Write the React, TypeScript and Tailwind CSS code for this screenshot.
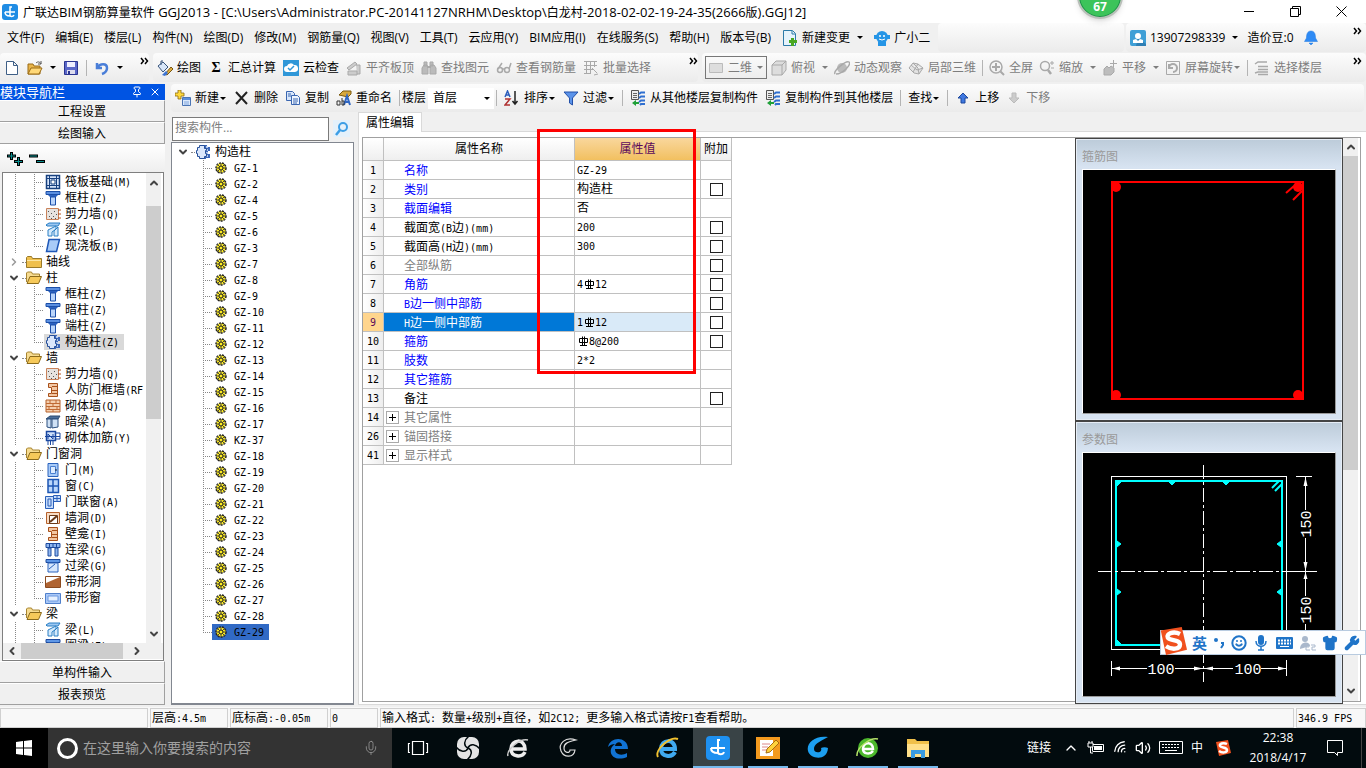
import type { ReactNode } from "react";
import { ChevronDown, ChevronLeft, ChevronRight, ChevronUp, Mic, Pin, Wifi, Volume2, Keyboard, Shirt, Wrench, Smile, X } from "lucide-react";

/* ---------- Iconos 16x16 ---------- */

const G = "#a9a9a9";

const column = (
  <>
    <path d="M1 1.500h14v3H1z" fill="#5b8fe0" stroke="#1c4fa8" />
    <path d="M3 5h10l-2 2H5z" fill="#2c62c0" />
    <path d="M5.500 7h5v8h-5z" fill="#b9d4fa" stroke="#1c4fa8" />
  </>
);

const wall = (
  <>
    <path d="M1.500 2.500h12v11h-12z" fill="#e6e3df" stroke="#c9825a" />
    <path d="M13 4h3M13 8h3M13 12h3" stroke="#b5521c" />
    <path d="M3 5.500h1M6 7.500h1M9 5.500h1M4 10.500h1M8 10.500h1M11 8.500h1M6 12.500h1M10 12.500h1" stroke="#555" />
  </>
);

const beam = (
  <>
    <path d="M1 3l3-2h11l-2 3H2z" fill="#9cc8f2" stroke="#2a7fc4" />
    <path d="M3 14V8l8-4v3l-4 3v4zM9 14V9l4-4v9z" fill="#d4eafc" stroke="#2a7fc4" />
  </>
);

const niche = (
  <>
    <path d="M3.500 1.500h9v13h-9v-3h3v-6h-3z" fill="#f3c7a3" stroke="#a8501a" />
    <path d="M7 4.500h5M7 8.500h5M7 11.500h5" stroke="#a8501a" />
  </>
);

const struct = (
  <>
    <path d="M9 1h3v2h3v4h-2v3h2v4h-4v1H9z" fill="#3a66b8" />
    <path d="M11 3h2M11 6h2M11 9h2M11 12h2" stroke="#dce8fb" strokeWidth="1.500" />
    <path d="M4.500 1.500h5v3h2v2h-1v3h1v3h-2v2h-5v-2h-2v-3h-1v-3h1v-3h2z" fill="#dbe7fb" stroke="#27509a" />
  </>
);

const copyFloor = (
  <>
    <path d="M1.500 .5h7v9h-7z" fill="#eee" stroke="#555" />
    <path d="M3 3.500h4M3 5.500h4M3 7.500h4" stroke="#666" />
    <path d="M9 4l2-1.500h4M9 8l2-1.500h4M9 12l2-1.500h4M10 15l1-1h4" stroke="#2f6fd0" strokeWidth="2" fill="none" />
    <path d="M2 13l4-3v2h3v2H6v2z" fill="#1fa038" />
  </>
);

const icons: Record<string, ReactNode> = {
  file: <path d="M2.500 1.500h7l4 4v9h-11zM9.500 1.500v4h4" fill="#fff" stroke="#3f5f86" />,
  open: (
    <>
      <path d="M1 4h5l1 2h6v8H1z" fill="#e9b54a" stroke="#9a6b14" />
      <path d="M1 14l3-6h11l-3 6z" fill="#ffd878" stroke="#9a6b14" />
      <path d="M9 3c2-2 4-1 5 1M14 1v3h-3" fill="none" stroke="#555" />
    </>
  ),
  save: (
    <>
      <path d="M1.500 1.500h13v13h-13z" fill="#5a67c8" stroke="#2a3490" />
      <path d="M4 2h8v5H4z" fill="#eef" />
      <path d="M4 10h8v4H4z" fill="#dde" />
      <path d="M5 11h2v3H5z" fill="#2a3490" />
    </>
  ),
  undo: <path d="M3 3v5h5M3 8c3-5 10-5 10 0 0 3-2 5-5 6" fill="none" stroke="#4a7ed8" strokeWidth="2.500" />,
  paint: (
    <>
      <path d="M1 6l5-4 5 5-5 5z" fill="#d8e6f8" stroke="#39557c" />
      <path d="M4 5V1h2" fill="none" stroke="#39557c" />
      <path d="M8 14l6-7 2 2-6 6z" fill="#e2b040" stroke="#775510" />
      <path d="M5 15l4-4 2 2-3 3z" fill="#3d74d4" />
    </>
  ),
  cloud: (
    <>
      <path d="M0 0h16v16H0z" fill="#2f97d8" />
      <path d="M4 12a3 3 0 0 1 0-6 4 4 0 0 1 7-1 3.500 3.500 0 0 1 1 7z" fill="#fff" />
      <path d="M5 8l2 2 4-4" fill="none" stroke="#2f97d8" strokeWidth="1.500" />
    </>
  ),
  align: <path d="M1 8l8-6 2 2-8 6zM2 11h9v4H2zM10 5h4v9h-3" fill="#ccc" stroke={G} />,
  find: (
    <>
      <path d="M3 2h3v4H3zM9 2h3v4H9zM1 8l2-3h3l1 3v6H1zM9 8l1-3h3l2 3v6H9z" fill="#bbb" stroke={G} />
      <path d="M6 7h4" stroke={G} strokeWidth="2" />
    </>
  ),
  glasses: (
    <g fill="none" stroke={G} strokeWidth="1.500">
      <circle cx="4" cy="10" r="2.500" />
      <circle cx="11" cy="10" r="2.500" />
      <path d="M6 9h3M2 9l4-6M13 9l2-6" />
    </g>
  ),
  batch: <path d="M1 1.500h13M1 5.500h13M1 9.500h9M1 13.500h7M3.500 1v13M7.500 1v13M11.500 1v6M9 8l5 5M11 15l4-1" fill="none" stroke={G} />,
  flat: <path d="M1.500 3.500h13v9h-13z" fill="#ddd" stroke="#bbb" />,
  cube: <path d="M1 5l4-4h10v9l-4 5H1zM1 5h10v10M11 5l4-4" fill="#ddd" stroke={G} />,
  orbit: (
    <>
      <circle cx="8" cy="8" r="5" fill="#bbb" />
      <path d="M1 14C-1 11 12 0 15 2s-6 12-13 12" fill="none" stroke={G} strokeWidth="1.500" />
    </>
  ),
  local3d: <path d="M1 8l4-5 5 1 5 4-4 6-5-1zM5 3l5 5 1 6M3 5l6 5 6-2M10 4L5 12" fill="#e3e3e3" stroke={G} />,
  full: (
    <g fill="none" stroke={G}>
      <circle cx="7" cy="7" r="6" strokeWidth="1.500" />
      <path d="M7 3v8M3 7h8M11.500 11.500L15 15" strokeWidth="2" />
    </g>
  ),
  zoom: (
    <g fill="none" stroke={G}>
      <circle cx="6" cy="6" r="4.500" strokeWidth="1.500" />
      <path d="M9 10l3 4" strokeWidth="2.500" />
      <path d="M11 3h4M13 1v4M12 8h3" />
    </g>
  ),
  pan: (
    <>
      <path d="M2 15V9l3-3 2 2 2-2 3 2v4l-3 3z" fill="#bdbdbd" stroke={G} />
      <path d="M11.500 0v7M8 3.500h7" stroke={G} />
    </>
  ),
  rotate: (
    <g fill="none" stroke={G}>
      <path d="M1.500 1.500h13v13h-13z" />
      <path d="M4 8a4 4 0 1 1 4 4M4 4v4h4" strokeWidth="2" />
    </g>
  ),
  floors: <path d="M1 4l3-2h9M4 6.500h10M4 9.500h10M1 13l3-1h10M4 14.500h10" fill="none" stroke={G} strokeWidth="1.500" />,
  add: (
    <>
      <path d="M3 0h3v3h3v3H6v3H3V6H0V3h3z" fill="#ffd93c" stroke="#8a6a12" strokeWidth=".8" />
      <path d="M7.500 7.500h8v8h-8z" fill="#dce9fb" stroke="#4a74b4" />
      <path d="M8 8h7v2H8z" fill="#5b8edc" />
      <path d="M9 12h5M9 14h5" stroke="#7fa4dc" />
    </>
  ),
  del: <path d="M2 2l11 12M13 2L2 14" stroke="#222" strokeWidth="2" />,
  copy: (
    <g stroke="#3a66b0">
      <path d="M1.500 1.500h6l2 2v7h-8z" fill="#d7e6fb" />
      <path d="M6.500 5.500h6l2 2v7h-8z" fill="#eef5ff" />
      <path d="M3 4h3M3 6h3M8 9h5M8 11h5M8 13h4" />
    </g>
  ),
  rename: (
    <>
      <path d="M3 5l4-4h8v3l-3 3z" fill="#d8a83c" stroke="#7b5a10" />
      <path d="M8 15l3-9 3 9M9 12h4" fill="none" stroke="#2f66c4" strokeWidth="2" />
      <path d="M1 15v-4h3v4zM6 8v7h2v-4H6" fill="none" stroke="#333" />
    </>
  ),
  sort: (
    <g fill="none" strokeWidth="1.500">
      <path d="M1 7l2.500-6L6 7M2 5h3" stroke="#2d5ebc" />
      <path d="M1 9h5l-5 6h5" stroke="#b03232" />
      <path d="M11 1v13M8.500 11l2.500 3 2.500-3" stroke="#222" />
    </g>
  ),
  filter: <path d="M1 2h14l-5.500 6v7l-3-2V8z" fill="#5b93ea" stroke="#2350a8" />,
  copyFloor,
  up: <path d="M8 3l5 5h-3v5H6V8H3z" fill="#3f78e0" stroke="#1d479c" />,
  down: <path d="M8 13l5-5h-3V3H6v5H3z" fill="#ccc" stroke="#bbb" />,
  change: (
    <>
      <path d="M1.500 .5h9l3 3v12h-12z" fill="#e6f3fb" stroke="#2c7aa8" />
      <path d="M10 1v3h3" fill="none" stroke="#2c7aa8" />
      <path d="M9 8h3v2h3v3h-3v3H9v-3H7v-3h2z" fill="#49a821" />
    </>
  ),
  robot: (
    <>
      <circle cx="8" cy="7" r="6" fill="#2595e6" />
      <path d="M0 5h3v4H0zM13 5h3v4h-3zM4 12h8v4H4z" fill="#2595e6" />
      <circle cx="6" cy="6" r="1" fill="#fff" />
      <circle cx="10" cy="6" r="1" fill="#fff" />
      <path d="M5 9q3 2 6 0" fill="none" stroke="#fff" />
    </>
  ),
  user: (
    <>
      <rect width="16" height="16" rx="2" fill="#3f9fd6" />
      <path d="M8 8l8 6v2H6z" fill="#2f7fb4" />
      <circle cx="8" cy="6" r="3" fill="#fff" />
      <path d="M3 13v-3l3-1 2 2 2-2 3 1v3z" fill="#fff" />
    </>
  ),
  bell: <path d="M8 1c4 0 4.500 4 4.500 7l2 3.500h-13l2-3.500C3.500 5 4 1 8 1zM6 13h4l-2 2z" fill="#2f8bf5" stroke="#1f78e0" strokeWidth=".5" />,
  app: (
    <>
      <rect width="16" height="16" rx="3" fill="#1f8ce4" />
      <path d="M10 3H8v8c0 2 3 2 4 0M3 8h10M3 8c0 3 2 4 5 4" fill="none" stroke="#fff" strokeWidth="1.500" />
    </>
  ),
  folder: (
    <>
      <path d="M.5 3.500l1-1h4l1 2h9v9H.5z" fill="#efc04e" stroke="#9a7a2a" />
      <path d="M1 6h14v1H1z" fill="#fbe6a6" />
    </>
  ),
  folderOpen: (
    <>
      <path d="M.5 12V3l1-1h4l1 2h7v3" fill="#f7dc92" stroke="#a88530" />
      <path d="M1 13.500l3-7h11.500l-3 7z" fill="#f6c95a" stroke="#8a6a1c" />
    </>
  ),
  raft: (
    <>
      <path d="M1.500 1.500h13v13h-13z" fill="#d6e4fa" stroke="#17407f" strokeWidth="1.500" />
      <path d="M4.500 1v14M11.500 1v14M1 4.500h14M1 11.500h14M6 6h4v4H6z" stroke="#17407f" fill="#fff" />
    </>
  ),
  column,
  wall,
  beam,
  niche,
  struct,
  slab: <path d="M4 1.500h10.500l-3 12H1.500z" fill="#a8cbf8" stroke="#1f58b8" strokeWidth="1.500" />,
  brick: (
    <>
      <path d="M1 2h14v12H1z" fill="#f5cfae" stroke="#b5602a" />
      <path d="M1 5.500h14M1 8.500h14M1 11.500h14M5 2v3M11 2v3M8 5v3M4 9v3M12 9v3M8 12v2" stroke="#c06a34" />
    </>
  ),
  hidden: (
    <>
      <path d="M1 5l4-3h10l-2 3z" fill="#4a6f9c" stroke="#2c4a70" />
      <path d="M2 5h4v9l-4-1zM7 5h6v8l-6 1z" fill="#cfe1f5" stroke="#2c5080" />
    </>
  ),
  masonry: (
    <g fill="none" stroke="#1947a0">
      <path d="M1.500 1.500h9v9h-9z" fill="#cfe1fb" strokeWidth="1.500" />
      <path d="M3 11v4M5.500 11v4M8 11v4M0 6.500h15M11 3h4v6h-4M3 9V4l5 5V4" />
    </g>
  ),
  door: (
    <>
      <path d="M3 1.500h10v13H3z" fill="#a8cbf8" stroke="#2a62bc" />
      <path d="M5.500 4.500h5v7h-5z" fill="#dcebff" stroke="#4a80d0" />
      <path d="M10 8h2" stroke="#123" />
    </>
  ),
  window: <path d="M3 1.500h10.500v13H3zM8 2v12M3 8h10" fill="#b9d6fb" stroke="#1c56b4" strokeWidth="1.500" />,
  doorWindow: <path d="M.5 2.500h8v12h-8zM3 5h3v7H3zM8.500 1.500h7v6h-7zM12 2v6M9 4.500h6" fill="#c6dcfb" stroke="#2a5fb8" />,
  hole: (
    <>
      <path d="M1.500 2.500h13v11h-13z" fill="#f8dcc4" stroke="#b5602a" />
      <path d="M4.500 5.500h8v8h-8z" fill="#fff" stroke="#6a3a18" />
      <path d="M5 12l7-6" stroke="#6a3a18" strokeWidth="2" />
    </>
  ),
  link: <path d="M1 1.500h14v4H1zM3 6h3v8H3zM10 6h3v8h-3zM4.500 2v3M8 2v3M11.500 2v3" fill="#8fb6f0" stroke="#1d4a9e" />,
  lintel: (
    <>
      <path d="M1 1.500h14v3H1z" fill="#5f97e6" stroke="#1d4a9e" />
      <path d="M3 5h10v9H3z" fill="#d6e6fc" stroke="#2a62bc" />
      <path d="M4 11l6-5" stroke="#2a62bc" />
    </>
  ),
  stripHole: (
    <>
      <path d="M.5 2.500h15v11H.5z" fill="#fff" stroke="#8a4a20" />
      <path d="M1 9l14-6v10H1z" fill="#b06432" />
    </>
  ),
  stripWindow: (
    <>
      <path d="M.5 3.500h15v10H.5z" fill="#a9c8f7" stroke="#5080cc" />
      <path d="M3 6h10v5H3z" fill="#e6f0ff" stroke="#6b98e0" />
    </>
  ),
  gear: (
    <>
      <circle cx="8" cy="8" r="5" fill="#ffee22" stroke="#222" strokeWidth="1.500" strokeDasharray="2 1" />
      <path d="M8 3v10M3 8h10M4 4l8 8M12 4l-8 8" stroke="#444" />
      <circle cx="8" cy="8" r="2" fill="#ffee22" stroke="#222" />
    </>
  ),
  sogou: (
    <>
      <path d="M1 2l12-2 3 13-12 3z" fill="#f0501e" />
      <path d="M12 4C8 2 4 4 5 6s7 1 7 4-5 3-8 1" fill="none" stroke="#fff" strokeWidth="2.500" />
    </>
  ),
};

function Icon({ name, className = "size-4" }: { name: string; className?: string }) {
  return (
    <svg viewBox="0 0 16 16" className={`${className} shrink-0`} aria-hidden="true">
      {icons[name]}
    </svg>
  );
}

/* Texto con letra latina de medio ancho junto a los caracteres chinos */
function Song({ text }: { text: string }) {
  return (
    <span className="whitespace-pre">
      {text.split(/([ -~]+)/).map((part, i) =>
        /^[ -~]/.test(part) ? (
          <span key={i} className="font-['DejaVu_Sans_Mono',monospace] text-[10px] leading-none">{part}</span>
        ) : (
          part
        )
      )}
    </span>
  );
}

/* ---------- Barras de herramientas ---------- */

function Caret() {
  return <span className="size-0 border-x-[3px] border-t-[3px] border-x-transparent border-t-current shrink-0" />;
}

function Tool({ icon, label, caret, disabled }: { icon?: string; label?: string; caret?: "near" | "far"; disabled?: boolean }) {
  return (
    <button className={`flex items-center whitespace-nowrap shrink-0 ${label ? "gap-1" : ""} ${disabled ? "text-[#7d7d7d]" : "text-black"}`} aria-label={label ?? icon}>
      {icon === "sum" ? <span className="w-4 text-center font-bold text-sm font-['Liberation_Serif',serif]">Σ</span> : icon && <Icon name={icon} />}
      <span className="flex items-center">
        {label}
        {caret === "near" && <span className="w-2 flex justify-center"><Caret /></span>}
        {caret === "far" && <span className="w-[13px] flex justify-end"><Caret /></span>}
      </span>
    </button>
  );
}

function Sep() {
  return <span className="w-px h-4 bg-[#b4b4b4] shrink-0" />;
}

function More() {
  return (
    <button className="self-start mt-1 ml-auto shrink-0" aria-label="more">
      <svg viewBox="0 0 9 8" className="w-[9px] h-2">
        <path d="M1 1l2.500 3L1 7M5 1l2.500 3L5 7" fill="none" stroke="#000" strokeWidth="1.500" />
      </svg>
    </button>
  );
}

const band = "flex items-center rounded-sm bg-linear-to-b from-[#fcfcfc] to-[#ebebeb]";

const menus = ["文件(F)", "编辑(E)", "楼层(L)", "构件(N)", "绘图(D)", "修改(M)", "钢筋量(Q)", "视图(V)", "工具(T)", "云应用(Y)", "BIM应用(I)", "在线服务(S)", "帮助(H)", "版本号(B)"];

function TitleBar() {
  return (
    <header className="relative flex items-center h-[23px] shrink-0 bg-white pl-[2px]">
      <Icon name="app" />
      <h1 className="ml-[5px] text-[13px] leading-5 truncate">
        <span className="text-xs">广联达</span>BIM<span className="text-xs">钢筋算量软件</span> GGJ2013 - [C:\Users\Administrator.PC-20141127NRHM\Desktop\<span className="text-xs">白龙村</span>-2018-02-02-19-24-35(2666<span className="text-xs">版</span>).GGJ12]
      </h1>
      <div className="ml-auto flex pr-[2px]">
        <button className="w-[46px] h-5 grid place-items-center" aria-label="minimize"><span className="w-[10px] h-px bg-black" /></button>
        <button className="w-[46px] h-5 grid place-items-center" aria-label="restore">
          <svg viewBox="0 0 11 11" className="size-[11px]"><path d="M.5 2.500h8v8h-8zM2.500 2.500v-2h8v8h-2" fill="none" stroke="#000" /></svg>
        </button>
        <button className="w-[46px] h-5 grid place-items-center" aria-label="close">
          <svg viewBox="0 0 11 11" className="size-[11px]"><path d="M.5 .5l10 10M10.500 .5l-10 10" stroke="#000" /></svg>
        </button>
      </div>
      {/* Bola flotante */}
      <div className="absolute right-[243px] -top-[27px] z-20 size-[46px] rounded-full border-2 border-[#b9bfb9] bg-[#3cc45a] shadow-md ring-1 ring-inset ring-[#1f8f4a] flex items-end justify-center pb-[2px] text-white text-xs leading-4 font-bold">
        67
      </div>
    </header>
  );
}

function MenuBar() {
  return (
    <nav className="flex h-[30px] shrink-0 gap-[2px] pb-px">
      <div className="flex items-center gap-[11px] pl-[7px] pr-[6px] shrink-0">
        {menus.map((m) => (
          <button key={m} className="whitespace-nowrap">{m}</button>
        ))}
        <Tool icon="change" label="新建变更" caret="far" />
        <Tool icon="robot" label="广小二" />
      </div>
      <div className={`${band} flex-1`} />
      <div className={`${band} w-60 shrink-0 gap-[9px] pl-1 pr-1`}>
        <Tool icon="user" label="13907298339" caret="far" />
        <span>造价豆:0</span>
        <Icon name="bell" />
        <More />
      </div>
    </nav>
  );
}

function MainToolbar() {
  return (
    <div className="flex h-[31px] shrink-0 gap-1 pb-[2px]">
      <div className={`${band} w-[149px] pl-1 gap-[7px]`}>
        <Tool icon="file" />
        <Tool icon="open" caret="far" />
        <Tool icon="save" />
        <Sep />
        <Tool icon="undo" caret="far" />
        <More />
      </div>
      <div className={`${band} w-[545px] pl-1 gap-[7px]`}>
        <Tool icon="paint" label="绘图" />
        <Tool icon="sum" label="汇总计算" />
        <Tool icon="cloud" label="云检查" />
        <Tool icon="align" label="平齐板顶" disabled />
        <Tool icon="find" label="查找图元" disabled />
        <Tool icon="glasses" label="查看钢筋量" disabled />
        <Tool icon="batch" label="批量选择" disabled />
        <More />
      </div>
      <div className={`${band} flex-1 pl-[3px] pr-1 gap-[6px]`}>
        <div className="relative flex items-center w-[62px] h-[23px] border border-[#777] shrink-0 pl-[2px] gap-1 text-[#7d7d7d] -mr-[2px]">
          <Icon name="flat" />
          <select aria-label="视图" className="appearance-none w-full outline-none">
            <option>二维</option>
          </select>
          <span className="absolute right-[3px] flex"><Caret /></span>
        </div>
        <Tool icon="cube" label="俯视" caret="far" disabled />
        <Tool icon="orbit" label="动态观察" disabled />
        <Tool icon="local3d" label="局部三维" disabled />
        <Sep />
        <Tool icon="full" label="全屏" disabled />
        <Tool icon="zoom" label="缩放" caret="far" disabled />
        <Tool icon="pan" label="平移" caret="far" disabled />
        <Tool icon="rotate" label="屏幕旋转" caret="near" disabled />
        <Sep />
        <Tool icon="floors" label="选择楼层" disabled />
        <More />
      </div>
    </div>
  );
}

function ComponentToolbar() {
  return (
    <div className={`${band} h-7 shrink-0 pl-1 gap-[7px] mr-[2px]`}>
      <Tool icon="add" label="新建" caret="near" />
      <Tool icon="del" label="删除" />
      <Tool icon="copy" label="复制" />
      <Tool icon="rename" label="重命名" />
      <div className="flex items-center gap-[2px]">
        <Sep />
        <label htmlFor="floor">楼层</label>
        <span className="relative flex items-center bg-white h-[21px] w-[66px]">
          <select id="floor" className="appearance-none w-full pl-[5px] outline-none">
            <option>首层</option>
          </select>
          <span className="absolute right-1 flex"><Caret /></span>
        </span>
        <Sep />
      </div>
      <Tool icon="sort" label="排序" caret="near" />
      <Tool icon="filter" label="过滤" caret="near" />
      <Sep />
      <Tool icon="copyFloor" label="从其他楼层复制构件" />
      <Tool icon="copyFloor" label="复制构件到其他楼层" />
      <Sep />
      <Tool label="查找" caret="near" />
      <Sep />
      <Tool icon="up" label="上移" />
      <Tool icon="down" label="下移" disabled />
    </div>
  );
}

/* ---------- Panel izquierdo ---------- */

type Node = { icon: string; label: string; folder?: boolean; closed?: boolean; last?: boolean; active?: boolean };

const tree: Node[] = [
  { icon: "raft", label: "筏板基础(M)" },
  { icon: "column", label: "框柱(Z)" },
  { icon: "wall", label: "剪力墙(Q)" },
  { icon: "beam", label: "梁(L)" },
  { icon: "slab", label: "现浇板(B)", last: true },
  { icon: "folder", label: "轴线", folder: true, closed: true },
  { icon: "folderOpen", label: "柱", folder: true },
  { icon: "column", label: "框柱(Z)" },
  { icon: "column", label: "暗柱(Z)" },
  { icon: "column", label: "端柱(Z)" },
  { icon: "struct", label: "构造柱(Z)", last: true, active: true },
  { icon: "folderOpen", label: "墙", folder: true },
  { icon: "wall", label: "剪力墙(Q)" },
  { icon: "niche", label: "人防门框墙(RF" },
  { icon: "brick", label: "砌体墙(Q)" },
  { icon: "hidden", label: "暗梁(A)" },
  { icon: "masonry", label: "砌体加筋(Y)", last: true },
  { icon: "folderOpen", label: "门窗洞", folder: true },
  { icon: "door", label: "门(M)" },
  { icon: "window", label: "窗(C)" },
  { icon: "doorWindow", label: "门联窗(A)" },
  { icon: "hole", label: "墙洞(D)" },
  { icon: "niche", label: "壁龛(I)" },
  { icon: "link", label: "连梁(G)" },
  { icon: "lintel", label: "过梁(G)" },
  { icon: "stripHole", label: "带形洞" },
  { icon: "stripWindow", label: "带形窗", last: true },
  { icon: "folderOpen", label: "梁", folder: true },
  { icon: "beam", label: "梁(L)" },
  { icon: "lintel", label: "圈梁(E)" },
];

function TreeRow({ node }: { node: Node }) {
  if (node.folder) {
    return (
      <li className="flex items-center h-4 pl-[5px]">
        {node.closed ? <ChevronRight className="size-3 text-[#999]" strokeWidth={3} /> : <ChevronDown className="size-3 text-[#444]" strokeWidth={4} />}
        <span className="w-1 ml-[2px] border-t border-dotted border-[#888]" />
        <Icon name={node.icon} />
        <span className="ml-1 flex"><Song text={node.label} /></span>
      </li>
    );
  }
  return (
    <li className="flex items-center h-4">
      <svg className="w-[41px] h-4 shrink-0" viewBox="0 0 41 16" aria-hidden="true">
        <path d={`M12.500 0v16M31.500 0v${node.last ? 8 : 16}M31 8.500h10`} stroke="#888" strokeDasharray="1 1" />
      </svg>
      <span className={`flex items-center h-4 gap-[4px] pl-px pr-[5px] whitespace-nowrap ${node.active ? "bg-[#d9d9d9]" : ""}`}>
        <Icon name={node.icon} />
        <Song text={node.label} />
      </span>
    </li>
  );
}

function NavButton({ label }: { label: string }) {
  return <button className="h-[22px] shrink-0 border-b border-r border-[#a0a0a0] border-t border-t-white pt-px leading-5">{label}</button>;
}

function NavPanel() {
  return (
    <aside className="flex flex-col w-[165px] shrink-0 pb-[2px]">
      <div className="flex items-center h-4 shrink-0 bg-[#0054e3] text-white text-[13px] leading-4">
        模块导航栏
        <Pin className="size-3 ml-auto mr-[6px]" />
        <X className="size-3 mr-1" />
      </div>
      <NavButton label="工程设置" />
      <NavButton label="绘图输入" />
      <div className="flex items-center h-7 shrink-0 pl-[7px] pt-px gap-[6px] bg-linear-to-b from-white to-[#eee]">
        <button aria-label="expand">
          <svg viewBox="0 0 16 16" className="size-4"><path d="M4.500 1v8M0 5h9M11.500 6v9M7 10.500h9" stroke="#000" strokeWidth="3" /><path d="M4.500 2v6M1 5h7M11.500 7v7M8 10.500h7" stroke="#0a8f8f" /></svg>
        </button>
        <button aria-label="collapse">
          <svg viewBox="0 0 17 16" className="w-[17px] h-4"><path d="M0 5h9M7 10.500h9" stroke="#000" strokeWidth="3" /><path d="M1 5h7M8 10.500h7" stroke="#0a8f8f" /></svg>
        </button>
      </div>
      <div className="flex flex-col flex-1 min-h-0 ml-[2px] mr-px border border-[#7f7f7f] bg-white">
        <div className="flex flex-1 min-h-0">
          <ul className="flex-1 min-w-0 overflow-hidden pt-px">
            {tree.map((n, i) => (
              <TreeRow key={i} node={n} />
            ))}
          </ul>
          <div className="w-[15px] mr-[2px] bg-[#f0f0f0] flex flex-col items-center">
            <ChevronUp className="size-3 mt-1 mb-[17px] shrink-0 text-[#444]" strokeWidth={4} />
            <div className="w-full h-[213px] bg-[#cdcdcd]" />
            <ChevronDown className="size-3 mt-auto mb-[3px] shrink-0 text-[#444]" strokeWidth={4} />
          </div>
        </div>
        <div className="flex items-center h-4 shrink-0 bg-[#f0f0f0] px-[2px] mb-px text-[#444]">
          <ChevronLeft className="size-3 ml-px" strokeWidth={4} />
          <div className="h-full w-[102px] ml-[3px] bg-[#cdcdcd]" />
          <ChevronRight className="size-3 ml-2" strokeWidth={4} />
        </div>
      </div>
      <NavButton label="单构件输入" />
      <NavButton label="报表预览" />
    </aside>
  );
}

/* ---------- Lista de componentes ---------- */

const items = ["1", "2", "4", "5", "6", "3", "7", "8", "9", "10", "11", "12", "13", "14", "15", "16", "17", "KZ-37", "18", "19", "20", "21", "22", "23", "24", "25", "26", "27", "28", "29"].map((n) =>
  n.startsWith("K") ? n : `GZ-${n}`
);

function ComponentList() {
  return (
    <section className="flex flex-col w-[183px] shrink-0 pb-[2px]">
      <div className="flex items-center h-[30px] shrink-0 pt-[3px] pl-px gap-1">
        <input aria-label="搜索构件" placeholder="搜索构件..." className="w-[157px] h-6 border border-[#7a7a7a] bg-white px-[2px] pb-[3px] outline-none placeholder:text-[#808080]" />
        <button className="size-[17px] bg-[#e4f1fb] grid place-items-center" aria-label="search">
          <svg viewBox="0 0 16 16" className="size-4"><circle cx="9" cy="6" r="4" fill="none" stroke="#3c9ee6" strokeWidth="2" /><path d="M6 9l-4 5" stroke="#3c9ee6" strokeWidth="2.500" /></svg>
        </button>
      </div>
      <ul className="flex-1 min-h-0 overflow-hidden border border-[#828790] border-b-2 bg-white pt-px">
        <li className="flex items-center h-4 pl-[5px]">
          <ChevronDown className="size-3 text-[#444]" strokeWidth={4} />
          <span className="w-1 ml-[2px] border-t border-dotted border-[#888]" />
          <Icon name="struct" />
          <span className="ml-1">构造柱</span>
        </li>
        {items.map((name, i) => {
          const selected = i === items.length - 1;
          return (
            <li key={name} className="flex items-center h-4">
              <svg className="w-10 h-4 shrink-0" viewBox="0 0 40 16" aria-hidden="true">
                <path d={`M31.500 0v${selected ? 8 : 16}M31 8.500h9`} stroke="#888" strokeDasharray="1 1" />
              </svg>
              <span className={`flex items-center h-4 pl-px pr-[5px] gap-[5px] ${selected ? "bg-[#316ac5]" : ""}`}>
                <Icon name="gear" />
                <Song text={name} />
              </span>
            </li>
          );
        })}
      </ul>
    </section>
  );
}

/* ---------- Editor de propiedades ---------- */

type Prop = { no: number; name: string; value?: ReactNode; tone?: "blue" | "gray"; check?: boolean; group?: boolean; active?: boolean };

function Rebar() {
  return (
    <svg viewBox="0 0 12 10" className="inline w-3 h-[10px] -mt-px" role="img" aria-label="rebar">
      <path d="M2.500 2.500h8v4h-8zM5.500 .5v9M7.500 .5v9M3 9.500h7" fill="none" stroke="#000" />
    </svg>
  );
}

const props: Prop[] = [
  { no: 1, name: "名称", value: <Song text="GZ-29" />, tone: "blue" },
  { no: 2, name: "类别", value: "构造柱", tone: "blue", check: true },
  { no: 3, name: "截面编辑", value: "否", tone: "blue" },
  { no: 4, name: "截面宽(B边)(mm)", value: <Song text="200" />, check: true },
  { no: 5, name: "截面高(H边)(mm)", value: <Song text="300" />, check: true },
  { no: 6, name: "全部纵筋", tone: "gray", check: true },
  { no: 7, name: "角筋", value: <><Song text="4" /><Rebar /><Song text="12" /></>, tone: "blue", check: true },
  { no: 8, name: "B边一侧中部筋", tone: "blue", check: true },
  { no: 9, name: "H边一侧中部筋", value: <><Song text="1" /><Rebar /><Song text="12" /></>, check: true, active: true },
  { no: 10, name: "箍筋", value: <><Rebar /><Song text="8@200" /></>, tone: "blue", check: true },
  { no: 11, name: "肢数", value: <Song text="2*2" />, tone: "blue" },
  { no: 12, name: "其它箍筋", tone: "blue" },
  { no: 13, name: "备注", check: true },
  { no: 14, name: "其它属性", tone: "gray", group: true },
  { no: 26, name: "锚固搭接", tone: "gray", group: true },
  { no: 41, name: "显示样式", tone: "gray", group: true },
];

function PropertyTable() {
  return (
    <table className="border-separate border-spacing-0 table-fixed w-[369px] [&_td]:border-r [&_td]:border-b [&_th]:border-r [&_th]:border-b [&_td]:border-[#c0c0c0] [&_th]:border-[#c0c0c0] [&_th]:font-normal [&_td]:p-0 [&_th]:p-0">
      <colgroup>
        <col className="w-[21px]" />
        <col className="w-[191px]" />
        <col className="w-[126px]" />
        <col className="w-[31px]" />
      </colgroup>
      <thead>
        <tr className="h-[23px] bg-linear-to-b from-white to-[#eee]">
          <th />
          <th>属性名称</th>
          <th className="bg-linear-to-b from-[#f9d79c] to-[#f2c05f] text-[#5b0a5b]">属性值</th>
          <th>附加</th>
        </tr>
      </thead>
      <tbody>
        {props.map((p) => (
          <tr key={p.no}>
            <th scope="row" className={p.active ? "bg-[#ffd58d] text-[#5b0a5b]" : "bg-linear-to-r from-white to-[#eee]"}>
              <div className="flex items-center justify-center h-[18px]"><Song text={String(p.no)} /></div>
            </th>
            <td className={p.active ? "bg-[#0078d7] text-white" : p.tone === "blue" ? "text-[#0000ff]" : p.tone === "gray" ? "text-[#808080]" : ""}>
              <div className="flex items-center h-[18px] pt-px">
                <span className="w-5 flex pl-[2px]">
                  {p.group && (
                    <button aria-label={p.name} className="size-[13px] border border-[#aaa] bg-white grid place-items-center">
                      <svg viewBox="0 0 7 7" className="size-[7px]"><path d="M0 3.500h7M3.500 0v7" stroke="#000" /></svg>
                    </button>
                  )}
                </span>
                <Song text={p.name} />
              </div>
            </td>
            <td className={p.active ? "bg-[#d9eaf8]" : ""}>
              <div className="flex items-center h-[18px] pl-[2px]">{p.value}</div>
            </td>
            <td>
              <div className="h-[18px] grid place-items-center">
                {p.check && <input type="checkbox" aria-label={`附加 ${p.name}`} className="appearance-none size-[13px] border border-[#222] bg-white" />}
              </div>
            </td>
          </tr>
        ))}
      </tbody>
    </table>
  );
}

function StirrupDrawing() {
  return (
    <svg viewBox="0 0 252 243" className="w-full bg-black">
      <rect x="29" y="12" width="191" height="217" fill="none" stroke="#f00" strokeWidth="2" />
      <g fill="#f00">
        <circle cx="33" cy="17" r="5" />
        <circle cx="215" cy="17" r="5" />
        <circle cx="33" cy="225" r="5" />
        <circle cx="215" cy="225" r="5" />
      </g>
      <path d="M203 23l8-7M210 30l9-9" stroke="#f00" strokeWidth="2" />
    </svg>
  );
}

function ParamDrawing() {
  return (
    <svg viewBox="0 0 252 243" className="w-full bg-black font-['Liberation_Mono',monospace] text-[15px]">
      <rect x="28.500" y="23.500" width="175" height="173" fill="none" stroke="#fff" />
      <rect x="33" y="28" width="166" height="164" fill="none" stroke="#0ff" strokeWidth="2" />
      <path d="M34 29h4l-4 4zM86 29h6l-3 3zM140 29h6l-3 3zM34 88v6l4-3zM34 136v6l4-3zM198 88v6l-4-3zM198 136v6l-4-3zM34 187v4h4z" fill="#0ff" stroke="#0ff" />
      <path d="M189 35l7-7M192 38l7-7" stroke="#0ff" strokeWidth="2" />
      <path d="M120.500 12v217M15 118.500h219" stroke="#fff" strokeDasharray="14 3 3 3" />
      <path d="M213 23.500h16M222.500 24v33M222.500 85v33M213 118.500h16M222.500 119v24M222.500 171v25M28.500 208v15M203.500 207v16M29 215.500h35M92 215.500h58M178 215.500h26" stroke="#fff" />
      <path d="M222.500 24l2 9h-4zM222.500 118l2-9h-4zM222.500 119l2 7h-4zM29 215.500l8-2v4zM120 215.500l-9-2v4zM121 215.500l9-2v4zM203 215.500l-8-2v4z" fill="#fff" />
      <g fill="#fff" textAnchor="middle">
        <text x="78" y="221">100</text>
        <text x="165" y="221">100</text>
        <text transform="translate(228 71) rotate(-90)">150</text>
        <text transform="translate(228 157) rotate(-90)">150</text>
      </g>
    </svg>
  );
}

function Preview({ title, children }: { title: string; children: ReactNode }) {
  return (
    <section className="flex-1 border border-[#444] px-[6px] pb-[6px] ring-1 ring-inset ring-[#e6edf6] bg-linear-to-b from-[#bccbd9] to-[#d7e3f1] to-10%">
      <h2 className="pt-[10px] pb-px h-[30px] leading-4 text-[#9a9a9a]">{title}</h2>
      <div className="border-t border-l border-white border-r border-b border-r-[#999] border-b-[#999]">{children}</div>
    </section>
  );
}

function InputMethodBar() {
  return (
    <div className="absolute right-0 bottom-[52px] z-10 flex items-center h-[25px] w-[206px] bg-[#fdfeff] border border-[#b8cbe0] text-[#1f74c8] pr-[5px]">
      <Icon name="sogou" className="size-7 -ml-[2px] -mt-[3px]" />
      <div className="flex flex-1 items-center justify-between pl-[5px]">
        <span className="text-[15px] leading-4 font-bold">英</span>
        <svg viewBox="0 0 12 12" className="size-3"><circle cx="3" cy="3" r="2" fill="currentColor" /><path d="M8 6h2v2l-2 3" fill="none" stroke="currentColor" strokeWidth="2" /></svg>
        <Smile className="size-4" strokeWidth={3} />
        <svg viewBox="0 0 16 16" className="size-4"><rect x="5" y="0" width="6" height="10" rx="3" fill="currentColor" /><path d="M3 6c0 7 10 7 10 0M8 11v4M5 15h6" fill="none" stroke="currentColor" strokeWidth="1.500" /></svg>
        <svg viewBox="0 0 17 14" className="w-[17px] h-[14px]"><rect x="0" y="1" width="17" height="12" rx="1" fill="currentColor" /><path d="M2 4.500h13M2 7.500h13" stroke="#fff" strokeWidth="2" strokeDasharray="2 1" /><path d="M4 10.500h9" stroke="#fff" /></svg>
        <svg viewBox="0 0 17 16" className="w-[17px] h-4"><circle cx="6" cy="4" r="3" fill="#a9b8cc" /><path d="M1 14c0-8 10-8 10-3" fill="#a9b8cc" /><path d="M6 10h4v2H7v3h4M12 10h4v2h-3v3h4" fill="none" stroke="#a9b8cc" /></svg>
        <Shirt className="size-4" fill="currentColor" />
        <Wrench className="size-4" fill="currentColor" />
      </div>
    </div>
  );
}

function Editor() {
  return (
    <main className="relative flex flex-col flex-1 min-w-0">
      <div className="flex h-5 shrink-0">
        <button className="w-16 bg-white border-t border-x border-[#d9d9d9] leading-5">属性编辑</button>
        <div className="flex-1 border-b border-[#d9d9d9]" />
      </div>
      <div className="flex-1 min-h-0 flex bg-white pt-[5px] pl-[3px] pr-[5px] pb-[2px] border-l border-b border-[#d9d9d9] mb-[2px]">
        <div className="flex flex-1 min-w-0 border border-[#a0a0a0]">
          <div className="flex-1 min-w-0">
            <PropertyTable />
          </div>
          <div className="flex flex-col w-[268px] shrink-0">
            <Preview title="箍筋图"><StirrupDrawing /></Preview>
            <Preview title="参数图"><ParamDrawing /></Preview>
          </div>
          <div className="w-[17px] shrink-0 pr-[2px] bg-white">
            <div className="h-full bg-[#f0f0f0] flex flex-col items-center text-[#444]">
              <ChevronUp className="size-3 my-[3px] shrink-0" strokeWidth={4} />
              <div className="w-full h-[314px] bg-[#cdcdcd]" />
              <ChevronDown className="size-3 mt-auto mb-1 shrink-0" strokeWidth={4} />
            </div>
          </div>
        </div>
      </div>
      {/* Marco rojo de la anotación */}
      <div className="absolute left-[179px] top-[17px] w-[159px] h-[245px] border-3 border-[#fe0000] pointer-events-none" />
      <InputMethodBar />
    </main>
  );
}

/* ---------- Barra de estado y barra de tareas ---------- */

function StatusBar() {
  const cell = "border border-[#d0d0d0] h-5 leading-[18px] pl-px overflow-hidden";
  return (
    <footer className="flex items-end h-[21px] shrink-0 gap-[2px] bg-[#f8f8f8]">
      <div className={`${cell} w-[148px]`} />
      <div className={`${cell} w-[78px]`}><Song text="层高:4.5m" /></div>
      <div className={`${cell} w-[98px]`}><Song text="底标高:-0.05m" /></div>
      <div className={`${cell} w-[48px]`}><Song text="0" /></div>
      <div className={`${cell} flex-1`}><Song text="输入格式: 数量+级别+直径，如2C12; 更多输入格式请按F1查看帮助。" /></div>
      <div className={`${cell} w-[70px]`}><Song text="346.9 FPS" /></div>
    </footer>
  );
}

const tasks: { name: string; open?: boolean; active?: boolean; art: ReactNode }[] = [
  { name: "task view", art: <path d="M6.500 5.500h11v13h-11zM4 7.500H2.500v9H4M20 7.500h1.500v9H20" fill="none" stroke="#fff" strokeWidth="1.200" /> },
  {
    name: "windmill",
    art: (
      <>
        <rect x="1" y="1" width="22" height="22" rx="7" fill="#e4e4e4" />
        <path d="M12 12C7 10 8 4 13 0M12 12c2-5 8-4 12 1M12 12c5 2 4 8-1 12M12 12c-2 5-8 4-12-1" fill="none" stroke="#020b0e" strokeWidth="1.500" />
      </>
    ),
  },
  {
    name: "browser",
    art: (
      <>
        <path d="M5 13h14c0-11-14-10-14 0 0 8 11 9 14 3" fill="none" stroke="#eee" strokeWidth="3.500" />
        <path d="M2 20C0 14 14 2 22 4" fill="none" stroke="#ccc" strokeWidth="1.500" />
      </>
    ),
  },
  { name: "glodon", art: <path d="M20 4C9 0 2 8 5 15s13 7 14-1h-5c0 4-6 3-6-2s4-6 12-8z" fill="none" stroke="#ddd" strokeWidth="1.200" /> },
  { name: "edge", art: <path d="M2 11C4 0 22 0 22 13H9c0 6 7 7 12 4v4C12 25 3 21 5 13c1-3 3-4 4-5-3 0-5 1-7 3zM9 10h7c0-5-6-5-7 0z" fill="#1173d4" /> },
  {
    name: "ie",
    art: (
      <>
        <path d="M5 13h14c0-11-14-10-14 0 0 8 11 9 14 3" fill="none" stroke="#3fa9f0" strokeWidth="4" />
        <path d="M2 21C-2 14 14 0 22 3" fill="none" stroke="#f2c230" strokeWidth="2" />
      </>
    ),
  },
  {
    name: "ggj",
    open: true,
    active: true,
    art: (
      <>
        <rect width="24" height="24" rx="4" fill="#1e90f0" />
        <path d="M14 4h-2v12c0 3 5 3 6 0M5 12h14M5 12c0 4 3 5 7 5" fill="none" stroke="#fff" strokeWidth="2" />
      </>
    ),
  },
  {
    name: "notes",
    open: true,
    art: (
      <>
        <path d="M0 1h24v22H0z" fill="#f39a1e" />
        <path d="M4 4h13v16H4z" fill="#fff" />
        <path d="M6 8h8M6 11h6M6 14h5" stroke="#d88" />
        <path d="M10 17l1-4L20 4l3 3-9 9z" fill="#ffd23c" stroke="#a86a10" />
      </>
    ),
  },
  { name: "G", open: true, art: <path d="M22 1C9-1 0 7 2 15s19 11 20-3c-2-1-5-1-7 0 2 5-7 6-7 1s5-7 14-12z" fill="#1c9ff0" /> },
  {
    name: "360",
    open: true,
    art: (
      <>
        <circle cx="12" cy="12" r="10" fill="#4cb82c" />
        <path d="M7 13h10c0-8-10-7-10 0 0 5 7 6 10 2" fill="none" stroke="#fff" strokeWidth="2.500" />
        <path d="M1 20C0 12 14 1 22 3" fill="none" stroke="#b6e36a" strokeWidth="1.500" />
      </>
    ),
  },
  {
    name: "explorer",
    open: true,
    art: (
      <>
        <path d="M1 3h8l2 2h12v16H1z" fill="#f0c04a" />
        <path d="M1 8h22v13H1z" fill="#ffe08a" />
        <path d="M5 22v-8h14v8h-4v-4H9v4z" fill="#3a9be0" />
      </>
    ),
  },
];

function Taskbar() {
  return (
    <div className="flex h-10 shrink-0 bg-[#020b0e] text-white">
      <button className="w-12 grid place-items-center bg-black" aria-label="start">
        <svg viewBox="0 0 16 16" className="size-4"><path d="M0 2l7-1v6.500H0zM8 1l8-1v7.500H8zM0 8.500h7V15l-7-1zM8 8.500h8V16l-8-1z" fill="#fff" /></svg>
      </button>
      <label className="flex items-center w-[344px] bg-[#333] pl-[9px] pr-[13px] gap-[5px]">
        <span className="size-[21px] rounded-full border-[3px] border-white shrink-0" />
        <input placeholder="在这里输入你要搜索的内容" className="flex-1 min-w-0 outline-none text-sm placeholder:text-[#a0a0a0]" />
        <Mic className="size-4 text-[#aaa]" strokeWidth={1} />
      </label>
      <div className="flex pl-px">
        {tasks.map((t) => (
          <button key={t.name} aria-label={t.name} className={`relative w-[50px] grid place-items-center ${t.active ? "bg-[#394346]" : ""}`}>
            <svg viewBox="0 0 24 24" className="size-6">{t.art}</svg>
            {t.open && <span className={`absolute bottom-0 h-[2px] bg-[#76b9ed] ${t.active ? "inset-x-0" : "inset-x-[5px]"}`} />}
          </button>
        ))}
      </div>
      <div className="ml-auto flex items-center pr-1">
        <span className="mr-3">链接</span>
        <ChevronUp className="size-4 mr-2" />
        <svg viewBox="0 0 18 14" className="w-[18px] h-[14px] mr-2"><path d="M5.500 3.500h11v7h-11z" fill="none" stroke="#fff" /><path d="M7 5h8v4H7z" fill="#fff" /><path d="M1 2h5v4H1zM2 0v2M5 0v2M3.500 6v6H6" fill="#020b0e" stroke="#fff" /></svg>
        <Wifi className="size-4 mr-[6px] rotate-[-45deg]" strokeWidth={2} />
        <Volume2 className="size-4 mr-2" strokeWidth={2} />
        <svg viewBox="0 0 24 14" className="w-6 h-[14px] mr-2"><path d="M.5 .5h23v12H.5z" fill="none" stroke="#fff" /><path d="M3 3.500h18M3 6.500h18" stroke="#fff" strokeDasharray="2 1" /><path d="M6 9.500h12" stroke="#fff" /></svg>
        <span className="mr-3">中</span>
        <Icon name="sogou" className="size-4 mr-4" />
        <time className="w-[62px] text-center leading-5">
          22:38
          <br />
          2018/4/17
        </time>
        <button className="mx-[17px]" aria-label="notifications">
          <svg viewBox="0 0 18 18" className="size-[18px]"><path d="M1.500 1.500h15v12h-5v3l-3-3h-7z" fill="none" stroke="#fff" /></svg>
        </button>
        <span className="w-px h-10 bg-[#444]" />
      </div>
    </div>
  );
}

export default function App() {
  return (
    <div className="flex flex-col h-screen overflow-hidden bg-[#f0f0f0] text-black text-xs font-['Open_Sans','Noto_Sans_CJK_SC',sans-serif]">
      <TitleBar />
      <MenuBar />
      <MainToolbar />
      <div className="flex flex-1 min-h-0 gap-[6px]">
        <NavPanel />
        <div className="flex flex-col flex-1 min-w-0">
          <ComponentToolbar />
          <div className="flex flex-1 min-h-0 gap-1">
            <ComponentList />
            <Editor />
          </div>
        </div>
      </div>
      <StatusBar />
      <Taskbar />
    </div>
  );
}
